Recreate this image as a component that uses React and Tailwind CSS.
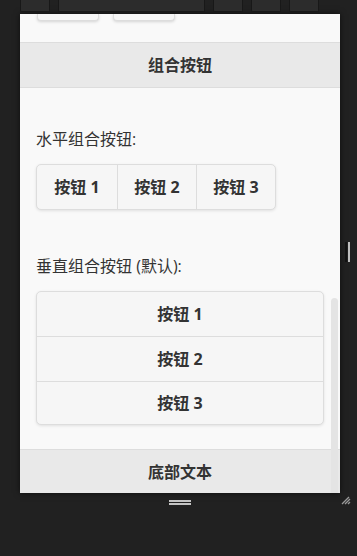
export default function App() {
  const font = { fontFamily: '"Open Sans", "Noto Sans CJK SC", sans-serif' };
  return (
    <div className="relative w-[357px] h-[556px] bg-[#212121] overflow-hidden text-[#333]" style={font}>
      {/* toolbar behind */}
      <div className="flex h-[12px] pl-[20px] gap-[8px]">
        <div className="w-[30px] h-[12px] bg-[#2c2c2c] border border-[#181818] border-t-0 rounded-b-[2px]" />
        <div className="w-[147px] h-[12px] bg-[#2c2c2c] border border-[#181818] border-t-0 rounded-b-[2px]" />
        <div className="w-[30px] h-[12px] bg-[#2c2c2c] border border-[#181818] border-t-0 rounded-b-[2px]" />
        <div className="w-[30px] h-[12px] bg-[#2c2c2c] border border-[#181818] border-t-0 rounded-b-[2px]" />
        <div className="w-[30px] h-[12px] bg-[#2c2c2c] border border-[#181818] border-t-0 rounded-b-[2px]" />
      </div>

      {/* panel */}
      <div className="ml-[20px] mt-[2px] w-[320px] h-[479px] bg-[#f9f9f9] shadow-[0_0_6px_rgba(0,0,0,0.6)] flex flex-col">
        <div className="h-[28px] flex gap-[14px] pl-[17px]">
          <div className="w-[62px] h-[7px] bg-[#f6f6f6] border border-[#ddd] border-t-0 rounded-b-[4px] shadow-[0_1px_3px_rgba(0,0,0,0.15)]" />
          <div className="w-[62px] h-[7px] bg-[#f6f6f6] border border-[#ddd] border-t-0 rounded-b-[4px] shadow-[0_1px_3px_rgba(0,0,0,0.15)]" />
        </div>
        <div className="h-[46px] bg-[#e9e9e9] border-y border-[#dddddd] flex items-center justify-center text-[16px] font-bold">
          组合按钮
        </div>
        <div className="flex-1 relative px-[16px]">
          <div className="mt-[41px] h-[20px] leading-[20px] text-[16px]">水平组合按钮:</div>
          <div className="mt-[15px] flex w-[240px] h-[46px] border border-[#dddddd] rounded-[5px] bg-[#f6f6f6] shadow-[0_1px_3px_rgba(0,0,0,0.1)] overflow-hidden text-[16px] font-bold">
            <div className="w-[80px] flex items-center justify-center">按钮 1</div>
            <div className="w-[79px] flex items-center justify-center border-l border-[#dddddd]">按钮 2</div>
            <div className="flex-1 flex items-center justify-center border-l border-[#dddddd]">按钮 3</div>
          </div>
          <div className="mt-[46px] h-[20px] leading-[20px] text-[16px]">垂直组合按钮 (默认):</div>
          <div className="mt-[15px] w-[288px] border border-[#dddddd] rounded-[5px] bg-[#f6f6f6] shadow-[0_1px_3px_rgba(0,0,0,0.1)] overflow-hidden text-[16px] font-bold">
            <div className="h-[44px] flex items-center justify-center">按钮 1</div>
            <div className="h-[45px] flex items-center justify-center border-t border-[#dddddd]">按钮 2</div>
            <div className="h-[43px] flex items-center justify-center border-t border-[#dddddd]">按钮 3</div>
          </div>
          <div className="absolute right-[2px] top-[210px] bottom-[-44px] w-[7px] bg-[#e4e4e4] rounded-t-[4px] z-10" />
        </div>
        <div className="h-[44px] bg-[#e9e9e9] border-t border-[#dddddd] flex items-center justify-center text-[16px] font-bold">
          底部文本
        </div>
      </div>

      {/* right resize handle */}
      <div className="absolute left-[345px] top-[242px] flex gap-[1px]">
        <div className="w-[2px] h-[20px] bg-[#bdbdbd] border-x border-[#111]" />
        <div className="w-[2px] h-[20px] bg-[#bdbdbd]" />
      </div>
      {/* bottom handle */}
      <div className="absolute left-[169px] top-[500px] flex flex-col gap-[1px]">
        <div className="w-[22px] h-[2px] bg-[#c4c4c4]" />
        <div className="w-[22px] h-[2px] bg-[#c4c4c4]" />
      </div>
      {/* corner grip */}
      <svg className="absolute left-[340px] top-[494px]" width="12" height="12" viewBox="0 0 12 12">
        <path d="M2 10 L9 3 M5 10 L10 5 M8 10 L10 8" stroke="#9a9a9a" strokeWidth="1.3" />
      </svg>
    </div>
  );
}
